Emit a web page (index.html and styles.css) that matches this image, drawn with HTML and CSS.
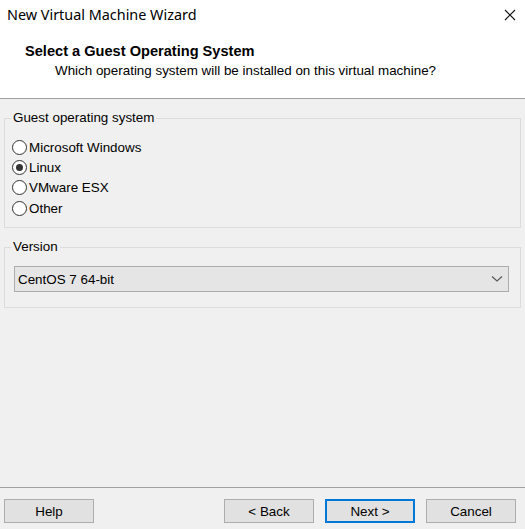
FILE: index.html
```html
<!DOCTYPE html>
<html lang="en">
<head>
    <meta charset="UTF-8">
    <title>New Virtual Machine Wizard</title>
    <link rel="stylesheet" href="styles.css">
</head>
<body>
    <div class="window">
        <div class="titlebar">
            <span class="title">New Virtual Machine Wizard</span>
            <button class="close" aria-label="Close">
                <svg width="12" height="12" viewBox="0 0 12 12"><path d="M1 1 L11 11 M11 1 L1 11" stroke="#111" stroke-width="1.1" fill="none"/></svg>
            </button>
        </div>
        <div class="header">
            <h1>Select a Guest Operating System</h1>
            <p>Which operating system will be installed on this virtual machine?</p>
        </div>
        <div class="content">
            <fieldset class="group os-group">
                <legend>Guest operating system</legend>
                <label class="radio"><input type="radio" name="os">Microsoft Windows</label>
                <label class="radio"><input type="radio" name="os" checked>Linux</label>
                <label class="radio"><input type="radio" name="os">VMware ESX</label>
                <label class="radio"><input type="radio" name="os">Other</label>
            </fieldset>
            <fieldset class="group version-group">
                <legend>Version</legend>
                <div class="select">
                    <span>CentOS 7 64-bit</span>
                    <svg width="12" height="8" viewBox="0 0 12 8"><path d="M1 1.5 L6 6 L11 1.5" stroke="#555" stroke-width="1.1" fill="none"/></svg>
                </div>
            </fieldset>
        </div>
        <div class="footer">
            <button class="btn">Help</button>
            <div class="spacer"></div>
            <button class="btn">&lt; Back</button>
            <button class="btn default">Next &gt;</button>
            <button class="btn">Cancel</button>
        </div>
    </div>
</body>
</html>
```

FILE: styles.css
```css
* {
    box-sizing: border-box;
    margin: 0;
    padding: 0;
}
body {
    width: 525px;
    height: 529px;
    font-family: 'Liberation Sans', Arial, sans-serif;
    font-size: 13.4px;
    color: #000;
    background: #f0f0f0;
}
.window {
    display: flex;
    flex-direction: column;
    height: 529px;
}
/* Title bar */
.titlebar {
    height: 29px;
    background: #fff;
    display: flex;
    align-items: center;
    justify-content: space-between;
    padding: 0 8px 0 7px;
}
.title {
    font-family: 'Noto Sans', sans-serif;
    font-size: 14.4px;
    color: #000;
}
.close {
    border: none;
    background: none;
    width: 14px;
    height: 14px;
    display: flex;
    align-items: center;
    justify-content: center;
}
/* Header */
.header {
    height: 70px;
    background: #fff;
    border-bottom: 1px solid #a0a0a0;
    padding: 14px 0 0 25px;
}
.header h1 {
    font-size: 14.6px;
    font-weight: bold;
    line-height: 17px;
}
.header p {
    margin: 3px 0 0 30px;
    line-height: 16px;
}
/* Group boxes */
.content {
    flex: 1;
    padding: 11px 4px 0 4px;
}
.group {
    border: 1px solid #dcdcdc;
    padding: 2px 10px 9px 7px;
}
.group legend {
    padding: 0 2px;
    margin-left: -1px;
    line-height: 16px;
}
.radio {
    display: flex;
    align-items: center;
    height: 20.3px;
}
.radio input {
    appearance: none;
    width: 15px;
    height: 15px;
    border: 1px solid #333;
    border-radius: 50%;
    background: #fff;
    margin: 0 2px 0 0;
    display: flex;
    align-items: center;
    justify-content: center;
}
.radio input:checked::after {
    content: "";
    width: 7px;
    height: 7px;
    border-radius: 50%;
    background: #333;
}
.os-group {
    padding-top: 11px;
}
.version-group {
    margin-top: 11px;
    padding-top: 11px;
    padding-bottom: 15px;
}
.select {
    height: 26px;
    margin-left: 2px;
    margin-right: 1px;
    background: #e5e5e5;
    border: 1px solid #acacac;
    display: flex;
    align-items: center;
    justify-content: space-between;
    padding: 0 5px 0 3px;
}
/* Footer buttons */
.footer {
    height: 42px;
    border-top: 1px solid #a0a0a0;
    display: flex;
    align-items: flex-start;
    padding: 11px 9px 0 4px;
    gap: 11px;
}
.spacer {
    flex: 1;
}
.btn {
    width: 90px;
    height: 24px;
    font-family: inherit;
    font-size: 13.4px;
    background: #e1e1e1;
    border: 1px solid #adadad;
    color: #000;
}
.btn.default {
    border: 2px solid #0078d7;
}
```
